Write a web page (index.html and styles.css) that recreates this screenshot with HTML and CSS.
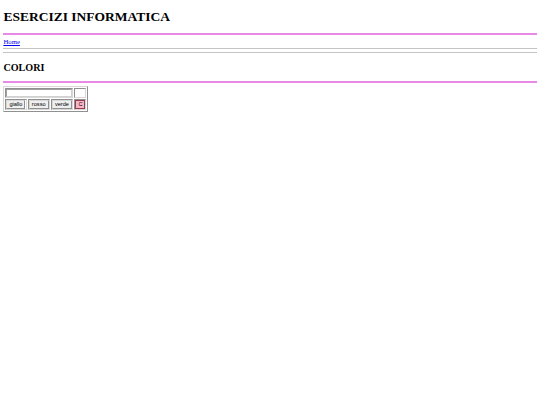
FILE: index.html
```html
<!DOCTYPE html>
<html>
<head>
<meta charset="utf-8">
<link rel="stylesheet" href="styles.css">
</head>
<body class="body">
<h1 class="title">ESERCIZI INFORMATICA</h1>
<hr class="rule-violet">
<a class="link" href="#">Home</a>
<hr class="rule">
<hr class="rule">
<h2 class="subtitle">COLORI</h2>
<hr class="rule-violet">
<table class="grid">
<tr>
<td class="cell" colspan="3"><input class="field" type="text"></td>
<td class="cell"></td>
</tr>
<tr>
<td class="cell"><button class="btn">giallo</button></td>
<td class="cell"><button class="btn">rosso</button></td>
<td class="cell"><button class="btn">verde</button></td>
<td class="cell"><button class="btn btn-c">C</button></td>
</tr>
</table>
</body>
</html>
```
FILE: styles.css
```css
html {
  background: #fff;
}
.body {
  margin: 3.4px;
  font-family: "Liberation Serif", serif;
  font-size: 6.75px;
  line-height: normal;
  color: #000;
}
.title {
  font-size: 13.5px;
  margin: 6px 0 8px;
  font-weight: bold;
}
.subtitle {
  font-size: 10.125px;
  margin: 8.4px 0;
  font-weight: bold;
}
.rule-violet {
  border: 0;
  border-top: 2px solid #e68ae6;
  height: 0;
  margin: 3px 0;
}
.rule {
  border: 0;
  border-top: 1px solid #c4c4c4;
  height: 0;
  margin: 3px 0;
}
.link {
  color: #0000ee;
  text-decoration: underline;
}
.grid {
  border: 1px solid;
  border-color: #d8d8d8 #909090 #909090 #d8d8d8;
  border-spacing: 1px;
}
.cell {
  border: 1px solid;
  border-color: #909090 #d8d8d8 #d8d8d8 #909090;
  padding: 0;
}
.field {
  display: block;
  width: 66px;
  box-sizing: border-box;
  height: 8px;
  border: 1px solid;
  border-color: #a0a0a0 #d0d0d0 #d0d0d0 #a0a0a0;
  font-family: "Liberation Sans", sans-serif;
  font-size: 5.6px;
  padding: 0 1px;
  margin: 0;
}
.btn {
  font-family: "Liberation Sans", sans-serif;
  font-size: 5.6px;
  line-height: 7px;
  padding: 0 2px;
  margin: 0;
  background: #efefef;
  border: 1px solid;
  border-color: #d8d8d8 #909090 #909090 #d8d8d8;
  color: #000;
}
.btn-c {
  background: #f6b6c6;
  border-color: #9a3a4e;
}
```
